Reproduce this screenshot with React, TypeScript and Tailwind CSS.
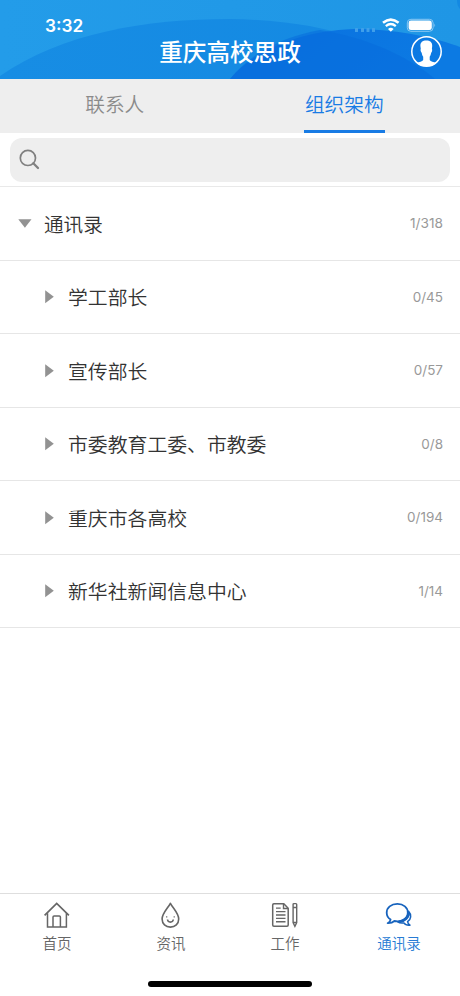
import type { ReactNode } from 'react';

const rows = [
  { name: '学工部长', count: '0/45', height: 'h-[73px]' },
  { name: '宣传部长', count: '0/57', height: 'h-[74px]' },
  { name: '市委教育工委、市教委', count: '0/8', height: 'h-[73px]' },
  { name: '重庆市各高校', count: '0/194', height: 'h-[74px]' },
  { name: '新华社新闻信息中心', count: '1/14', height: 'h-[73px]' },
];

function HeaderWaves() {
  return (
    <svg className="absolute inset-0" width="460" height="79" viewBox="0 0 460 79">
      <defs>
        <linearGradient id="sky" x1="0" x2="1" y1="0" y2="0">
          <stop offset="0" stopColor="#239ce9" />
          <stop offset="1" stopColor="#1f96e5" />
        </linearGradient>
        <linearGradient id="hill" x1="0" x2="1" y1="0" y2="0">
          <stop offset="0" stopColor="#178de4" />
          <stop offset="1" stopColor="#1489e2" />
        </linearGradient>
        <linearGradient id="deep" x1="0" x2="1" y1="0" y2="0.3">
          <stop offset="0" stopColor="#0970df" />
          <stop offset="1" stopColor="#0c7ae3" />
        </linearGradient>
      </defs>
      <rect width="460" height="79" fill="url(#sky)" />
      <path d="M0 76C62 33 145 19 230 19C320 20 390 42 435 79H0Z" fill="url(#hill)" />
      <path d="M230 79C256 48 306 29 361 29C401 30 436 38 460 47V79Z" fill="url(#deep)" />
      <path d="M320 30C365 37 408 56 435 79H230C252 51 286 36 320 30Z" fill="#076cdd" opacity=".55" />
      <path d="M457 0C457 4 458 7 460 9V0Z" fill="#1489e2" />
    </svg>
  );
}

function StatusIcons() {
  return (
    <svg className="absolute left-[350px] top-[14px]" width="90" height="24" viewBox="350 14 90 24" fill="none">
      <g fill="#3f9fea">
        <rect x="355" y="28" width="3" height="4" rx=".5" />
        <rect x="361" y="28" width="3" height="4" rx=".5" />
        <rect x="366.500" y="28" width="3" height="4" rx=".5" />
        <rect x="372" y="28" width="3" height="4" rx=".5" />
      </g>
      <path d="M383 22.800Q390.800 16.400 398.600 22.800" stroke="#fff" strokeWidth="2.600" />
      <path d="M385.800 26.100Q390.800 22 395.800 26.100" stroke="#fff" strokeWidth="2.300" />
      <path d="M388 28.900Q390.800 26.800 393.600 28.900L390.800 31.700Z" fill="#fff" />
      <rect x="407.300" y="19.300" width="25.800" height="12" rx="3.600" stroke="#8bc9f3" />
      <rect x="408.600" y="20.500" width="23.200" height="9.600" rx="2.400" fill="#fff" />
      <path d="M434.400 23.500Q436 25.300 434.400 27.200Z" fill="#8bc9f3" />
    </svg>
  );
}

function Avatar() {
  return (
    <svg className="absolute left-[410px] top-[35px]" width="33" height="33" viewBox="0 0 33 33" fill="none">
      <path d="M10.400 11C10.200 7.300 12.600 5.500 16.300 5.500C20 5.500 22.400 7.300 22.200 11L21.900 14C22.600 14.300 22 17.300 21.200 17.700C20.800 19.700 20.300 20.800 19.700 21.800V25C20.600 26.600 23.600 26.800 26.300 27.900C22.300 32 10.600 32 6.600 27.900C9.300 26.800 12.300 26.600 13.200 25V21.800C12.500 20.800 12 19.700 11.700 17.700C10.800 17.300 10.100 14.300 10.800 14Z" fill="#fff" />
      <circle cx="16.500" cy="16.500" r="14.700" stroke="#fff" strokeWidth="1.500" />
    </svg>
  );
}

function Triangle({ open = false }: { open?: boolean }) {
  return open ? (
    <svg width="14" height="9" viewBox="0 0 14 9"><path d="M.3.300H13.500L6.900 8.700Z" fill="#929292" /></svg>
  ) : (
    <svg width="9" height="14" viewBox="0 0 9 14"><path d="M.2.300V13.300L8.800 6.800Z" fill="#929292" /></svg>
  );
}

function HomeIcon() {
  return (
    <svg width="28" height="28" viewBox="0 0 28 28" fill="none" stroke="#666" strokeWidth="1.500">
      <path d="M1.600 14.400L13.700 2.500L25.900 14.400" strokeWidth="1.700" />
      <path d="M4.500 12.300V26H23.400V12.300M10 26V16Q10 14.900 11.100 14.900H16.300Q17.400 14.900 17.400 16V26" />
    </svg>
  );
}

function DropIcon() {
  return (
    <svg width="28" height="28" viewBox="0 0 28 28" fill="none" stroke="#666">
      <path d="M13.400 2.300C10.900 7.200 5.100 12.300 5.100 18C5.100 22.900 8.700 26.100 13.400 26.100S21.700 22.900 21.700 18C21.700 12.300 15.900 7.200 13.400 2.300Z" strokeWidth="1.600" strokeLinejoin="round" />
      <path d="M10.500 18.500C11 22 15.800 22 16.300 18.500" strokeWidth="1.600" />
      <path d="M9.100 15.800H10.300M16.600 15.800H17.800" strokeWidth="1.300" />
    </svg>
  );
}

function WorkIcon() {
  return (
    <svg width="28" height="28" viewBox="0 0 28 28" fill="none" stroke="#666" strokeWidth="1.500">
      <path d="M2.900 2.700H12.800L17.200 7.200V24.100Q17.200 25.300 16 25.300H2.900Q1.700 25.300 1.700 24.100V3.900Q1.700 2.700 2.900 2.700Z" />
      <path d="M12.500 3V7.500H17M5 7.100H9.700M5 10.600H14.500M5 14H14.500M5 17.400H14.500M5 20.800H14.500" strokeWidth="1.400" />
      <path d="M22.100 3.500Q22.100 2.600 23 2.600H24.900Q25.700 2.600 25.700 3.500V21.700L23.900 25.400L22.100 21.700ZM22.100 6.500H25.700M22.400 21.500H25.400" strokeWidth="1.400" />
    </svg>
  );
}

function ChatIcon() {
  return (
    <svg width="28" height="28" viewBox="0 0 28 28" fill="none" stroke="#1763bd" strokeLinejoin="round">
      <path d="M12.400 2.900C6.100 2.900 1.700 6.600 1.700 11.700C1.700 14.600 3.300 17.100 5.600 18.600C5.300 20.200 4.100 21.400 2.600 22.200C5.400 22.300 7.800 21.600 9.400 20C16.600 21.400 22.800 17.500 22.800 11.700C22.800 6.600 18.500 2.900 12.400 2.900Z" strokeWidth="1.800" />
      <path d="M23.600 10.300C26.800 13.800 26.200 18.100 22.600 20.700C22.800 22.200 23.600 23.300 25 24.200C22 24.500 20 23.600 18.900 21.900C16.500 22.300 14.300 21.900 12.700 20.900C20.100 20.400 24.700 16 23.600 10.300Z" strokeWidth="1.500" />
      <path d="M23.600 11.100C24.100 16.100 19.700 20.100 14.500 20.700" strokeWidth="2.600" />
    </svg>
  );
}

function NavItem({ icon, label, active = false }: { icon: ReactNode; label: string; active?: boolean }) {
  return (
    <button className={`flex w-[114px] flex-col items-center pt-[7px] ${active ? 'text-[#277bd4]' : 'text-[#666]'}`}>
      {icon}
      <span className="mt-[4px] text-[14.500px] font-[350] leading-[20px]">{label}</span>
    </button>
  );
}

export default function App() {
  return (
    <div className="flex h-[996px] w-[460px] flex-col overflow-hidden bg-white font-['Noto_Sans_CJK_SC',sans-serif]">
      <header className="relative h-[79px] shrink-0 text-white">
        <HeaderWaves />
        <span className="absolute left-[45px] top-[14px] font-['Inter',sans-serif] text-[17.300px] font-semibold leading-[24px]">3:32</span>
        <StatusIcons />
        <h1 className="relative pt-[34px] text-center text-[23.600px] font-medium leading-[34px]">重庆高校思政</h1>
        <Avatar />
      </header>

      <nav className="flex h-[54px] shrink-0 bg-[#eee] text-[19.700px] font-[350]">
        <button className="flex flex-1 justify-center pt-[10px] leading-[30px] text-[#8a8a8a]">联系人</button>
        <button className="flex flex-1 justify-center pr-[1px] leading-[30px] text-[#187be4]">
          <span className="h-[54px] w-[81px] border-b-[3px] border-[#187be4] pt-[10px]">组织架构</span>
        </button>
      </nav>

      <div className="h-[54px] shrink-0 border-b border-[#e9e9e9] px-[10px] pt-[5px]">
        <div className="flex h-[44px] items-center rounded-[12px] bg-[#eee] pl-[9px]">
          <svg width="22" height="22" viewBox="0 0 22 22" fill="none" stroke="#808080">
            <circle cx="8.900" cy="8.900" r="7.600" strokeWidth="1.700" />
            <path d="M14.300 14.300L19 19" strokeWidth="2.300" strokeLinecap="round" />
          </svg>
        </div>
      </div>

      <main className="flex-1 text-[19.850px] font-[350] text-[#333]">
        <div className="flex h-[74px] items-center border-b border-[#e6e6e6] pl-[18px] pr-[17px]">
          <Triangle open />
          <span className="ml-[12px] flex-1 text-[19.600px]">通讯录</span>
          <span className="font-['Inter',sans-serif] text-[13.700px] font-normal text-[#999]">1/318</span>
        </div>
        {rows.map((row) => (
          <div key={row.name} className={`flex items-center border-b border-[#e6e6e6] pl-[45px] pr-[17px] ${row.height}`}>
            <Triangle />
            <span className="ml-[14px] flex-1">{row.name}</span>
            <span className="font-['Inter',sans-serif] text-[13.500px] font-normal text-[#999]">{row.count}</span>
          </div>
        ))}
      </main>

      <footer className="h-[103px] shrink-0 border-t border-[#dedede]">
        <div className="flex h-[87px]">
          <NavItem icon={<HomeIcon />} label="首页" />
          <NavItem icon={<DropIcon />} label="资讯" />
          <NavItem icon={<WorkIcon />} label="工作" />
          <NavItem icon={<ChatIcon />} label="通讯录" active />
        </div>
        <div className="mx-auto h-[6px] w-[164px] rounded-full bg-black" />
      </footer>
    </div>
  );
}
